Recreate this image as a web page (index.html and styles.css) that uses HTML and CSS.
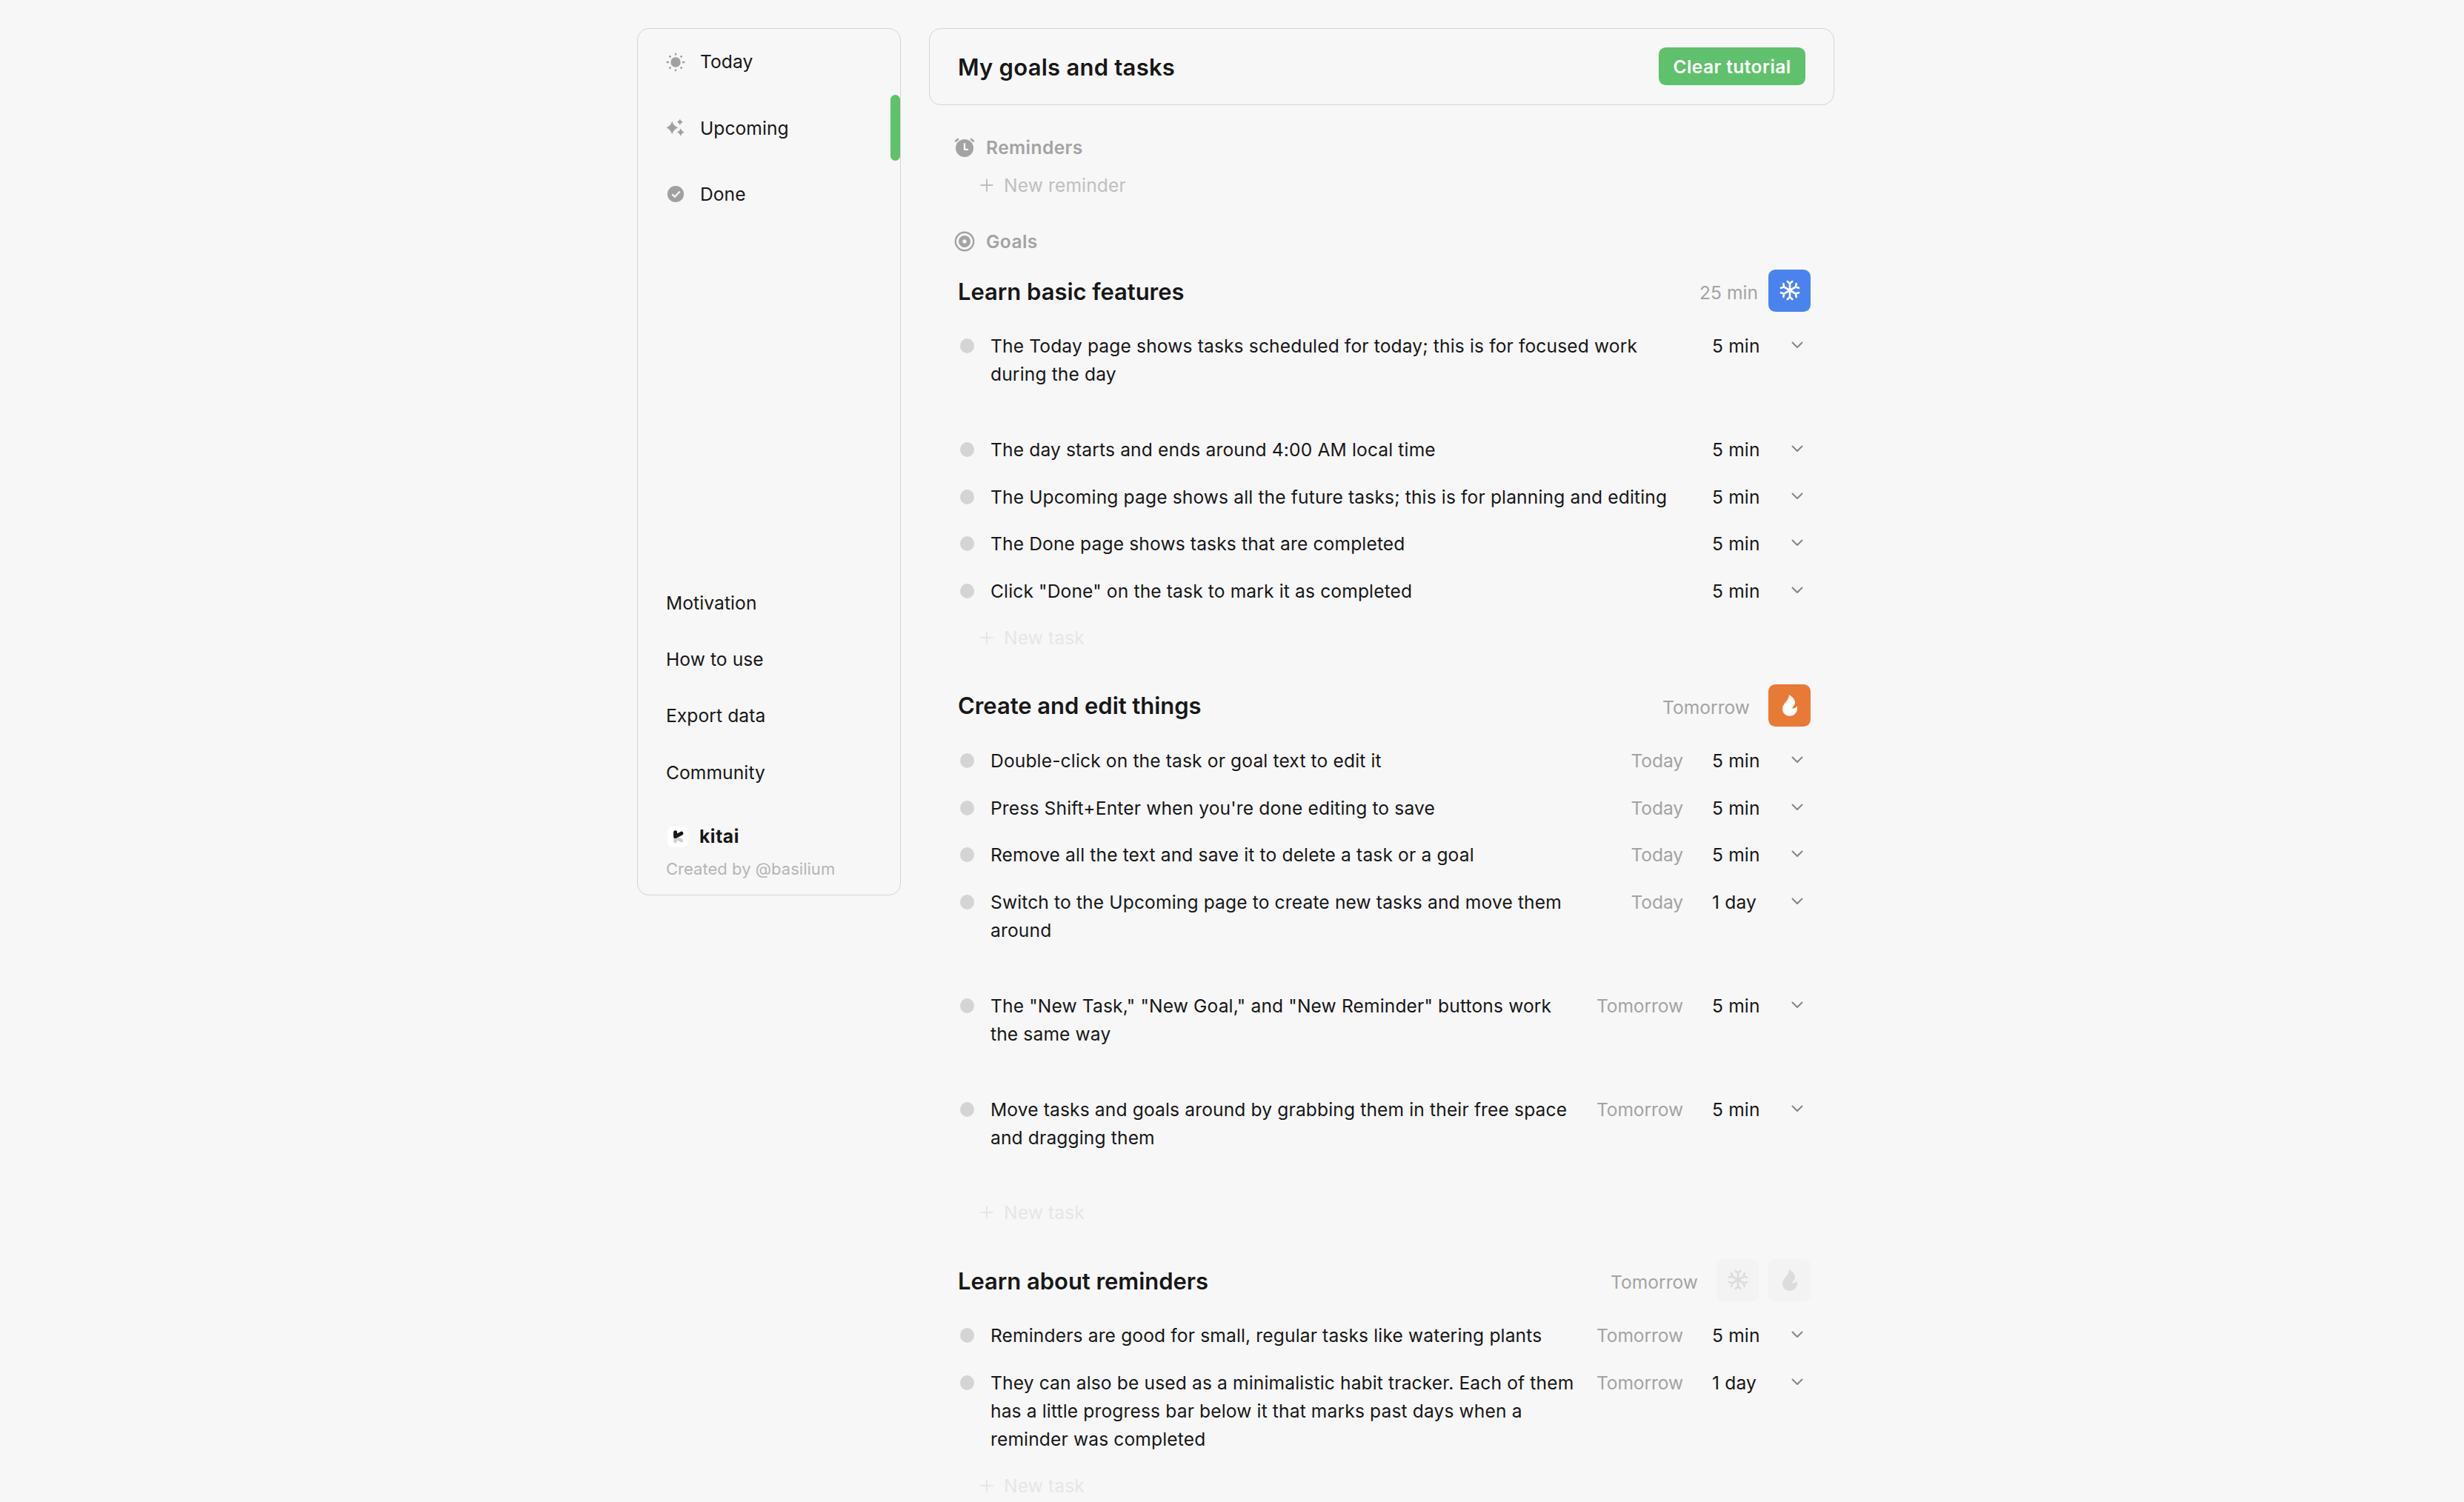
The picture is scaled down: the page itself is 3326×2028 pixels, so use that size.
FILE: index.html
```
<!DOCTYPE html>
<html lang="en">
<head>
<meta charset="UTF-8">
<meta name="viewport" content="width=device-width, initial-scale=1.0">
<title>kitai</title>
<link rel="stylesheet" href="styles.css">
</head>
<body>
<!-- shared icons -->
<svg class="defs">
  <symbol id="chevron" viewBox="0 0 16 10">
    <path d="M1.5 1.5L8 8L14.5 1.5" fill="none" stroke="currentColor" stroke-width="2" stroke-linecap="round" stroke-linejoin="round"/>
  </symbol>
  <symbol id="plus" viewBox="0 0 18 18">
    <path d="M9 0.5V17.5M0.5 9H17.5" stroke="currentColor" stroke-width="2"/>
  </symbol>
  <symbol id="snow" viewBox="-15 -15 30 30">
    <g fill="none" stroke="currentColor" stroke-width="2.6" stroke-linecap="round" stroke-linejoin="round">
      <g id="arms"><path d="M0 -9V9M-3.3 -12L0 -9L3.3 -12M-3.3 12L0 9L3.3 12"/></g>
      <use href="#arms" transform="rotate(60)"/>
      <use href="#arms" transform="rotate(120)"/>
    </g>
  </symbol>
  <symbol id="fire" viewBox="0 0 60 86">
    <path d="M27 0C43 9 51 20 51 31C51 42 41 47 39 55C47 56 54 52 59 46C64 68 50 86 29 86C12 86 0 73 0 56C0 34 25 28 27 0Z" fill="currentColor"/>
  </symbol>
</svg>

<div class="page">
  <aside class="sidebar">
    <nav>
      <a class="nav-item">
        <svg class="nav-icon" viewBox="-13 -13 26 26">
          <circle r="6.7" fill="currentColor"/>
          <path d="M0 -12.3V-9.4M0 9.4V12.3M-12.3 0H-9M9 0H12.3M-8.6 -8.6L-6.6 -6.6M8.6 -8.6L6.6 -6.6M-8.6 8.6L-6.6 6.6M8.6 8.6L6.6 6.6" stroke="currentColor" stroke-width="2.3"/>
        </svg>
        Today
      </a>
      <a class="nav-item">
        <svg class="nav-icon" viewBox="-13 -13 26 26">
          <path d="M-4.8 -9.2Q-2.7 -2.7 3.3 -0.5Q-2.7 1.7 -4.8 8.2Q-6.9 1.7 -12.6 -0.5Q-6.9 -2.7 -4.8 -9.2ZM5.8 -12.3Q7 -9.4 9.8 -8.3Q7 -7.2 5.8 -4.3Q4.6 -7.2 1.8 -8.3Q4.6 -9.4 5.8 -12.3ZM6.8 0.6Q8 4.2 11.8 5.6Q8 7 6.8 11Q5.6 7 1.8 5.6Q5.6 4.2 6.8 0.6Z" fill="currentColor"/>
        </svg>
        Upcoming
        <span class="marker"></span>
      </a>
      <a class="nav-item">
        <svg class="nav-icon" viewBox="-13 -13 26 26">
          <circle r="11.1" fill="currentColor"/>
          <path d="M-4.8 0.3L-1.2 3.6L5.8 -3.6" fill="none" stroke="#f7f7f7" stroke-width="2.2"/>
        </svg>
        Done
      </a>
    </nav>
    <div class="links">
      <a>Motivation</a>
      <a>How to use</a>
      <a>Export data</a>
      <a>Community</a>
      <div class="brand">
        <svg class="logo" viewBox="0 0 28 28">
          <rect width="28" height="28" rx="7" fill="#fff"/>
          <path d="M10.5 20V15L18.8 18.8" fill="none" stroke="#cfcfcf" stroke-width="4.6" stroke-linecap="round" stroke-linejoin="round"/>
          <path d="M10.6 7.8V13.6L18.8 9.2" fill="none" stroke="#171717" stroke-width="5" stroke-linecap="round" stroke-linejoin="round"/>
        </svg>
        kitai
      </div>
      <div class="author">Created by @basilium</div>
    </div>
  </aside>

  <main class="main">
    <header class="header">
      <h1>My goals and tasks</h1>
      <button class="clear">Clear tutorial</button>
    </header>

    <div class="label">
      <svg class="label-icon" viewBox="-14 -14 28 28">
        <circle cy="1" r="12" fill="currentColor"/>
        <path d="M-12.6 -7.8L-8.2 -11.8M12.6 -7.8L8.2 -11.8" stroke="currentColor" stroke-width="2.6"/>
        <path d="M0 -5.8V2.9H5" fill="none" stroke="#f7f7f7" stroke-width="2.4"/>
      </svg>
      Reminders
    </div>
    <div class="new new-reminder"><svg class="plus"><use href="#plus"/></svg>New reminder</div>
    <div class="label label-goals">
      <svg class="label-icon" viewBox="-14 -14 28 28">
        <circle r="12.2" fill="none" stroke="currentColor" stroke-width="2.4"/>
        <circle r="5.4" fill="none" stroke="currentColor" stroke-width="5.2"/>
      </svg>
      Goals
    </div>

    <section class="goal goal-first">
      <div class="goal-head">
        <h2>Learn basic features</h2>
        <span class="goal-info total">25 min</span>
        <span class="badge blue"><svg class="snow"><use href="#snow"/></svg></span>
      </div>
      <div class="task tall"><i class="dot"></i><p>The Today page shows tasks scheduled for today; this is for focused work<br>during the day</p><span class="due"></span><span class="time">5 min</span><svg class="chevron"><use href="#chevron"/></svg></div>
      <div class="task"><i class="dot"></i><p>The day starts and ends around 4:00 AM local time</p><span class="due"></span><span class="time">5 min</span><svg class="chevron"><use href="#chevron"/></svg></div>
      <div class="task"><i class="dot"></i><p>The Upcoming page shows all the future tasks; this is for planning and editing</p><span class="due"></span><span class="time">5 min</span><svg class="chevron"><use href="#chevron"/></svg></div>
      <div class="task"><i class="dot"></i><p>The Done page shows tasks that are completed</p><span class="due"></span><span class="time">5 min</span><svg class="chevron"><use href="#chevron"/></svg></div>
      <div class="task"><i class="dot"></i><p>Click "Done" on the task to mark it as completed</p><span class="due"></span><span class="time">5 min</span><svg class="chevron"><use href="#chevron"/></svg></div>
      <div class="new new-task"><svg class="plus"><use href="#plus"/></svg>New task</div>
    </section>

    <section class="goal">
      <div class="goal-head">
        <h2>Create and edit things</h2>
        <span class="goal-info">Tomorrow</span>
        <span class="badge orange"><svg class="fire"><use href="#fire"/></svg></span>
      </div>
      <div class="task"><i class="dot"></i><p>Double-click on the task or goal text to edit it</p><span class="due">Today</span><span class="time">5 min</span><svg class="chevron"><use href="#chevron"/></svg></div>
      <div class="task"><i class="dot"></i><p>Press Shift+Enter when you're done editing to save</p><span class="due">Today</span><span class="time">5 min</span><svg class="chevron"><use href="#chevron"/></svg></div>
      <div class="task"><i class="dot"></i><p>Remove all the text and save it to delete a task or a goal</p><span class="due">Today</span><span class="time">5 min</span><svg class="chevron"><use href="#chevron"/></svg></div>
      <div class="task tall"><i class="dot"></i><p>Switch to the Upcoming page to create new tasks and move them<br>around</p><span class="due">Today</span><span class="time">1 day</span><svg class="chevron"><use href="#chevron"/></svg></div>
      <div class="task tall"><i class="dot"></i><p>The "New Task," "New Goal," and "New Reminder" buttons work<br>the same way</p><span class="due">Tomorrow</span><span class="time">5 min</span><svg class="chevron"><use href="#chevron"/></svg></div>
      <div class="task tall"><i class="dot"></i><p>Move tasks and goals around by grabbing them in their free space<br>and dragging them</p><span class="due">Tomorrow</span><span class="time">5 min</span><svg class="chevron"><use href="#chevron"/></svg></div>
      <div class="new new-task"><svg class="plus"><use href="#plus"/></svg>New task</div>
    </section>

    <section class="goal">
      <div class="goal-head">
        <h2>Learn about reminders</h2>
        <span class="goal-info">Tomorrow</span>
        <span class="badge"><svg class="snow"><use href="#snow"/></svg></span>
        <span class="badge"><svg class="fire"><use href="#fire"/></svg></span>
      </div>
      <div class="task"><i class="dot"></i><p>Reminders are good for small, regular tasks like watering plants</p><span class="due">Tomorrow</span><span class="time">5 min</span><svg class="chevron"><use href="#chevron"/></svg></div>
      <div class="task tall"><i class="dot"></i><p>They can also be used as a minimalistic habit tracker. Each of them<br>has a little progress bar below it that marks past days when a<br>reminder was completed</p><span class="due">Tomorrow</span><span class="time">1 day</span><svg class="chevron"><use href="#chevron"/></svg></div>
      <div class="new new-task"><svg class="plus"><use href="#plus"/></svg>New task</div>
    </section>
  </main>
</div>
</body>
</html>
```
FILE: styles.css
```
html {
  font-size: 25.45px;
}
* {
  box-sizing: border-box;
}
body {
  margin: 0;
  height: 2028px;
  overflow: hidden;
  background: #f7f7f7;
  color: #171717;
  font-family: Inter, "Liberation Sans", sans-serif;
  font-size: 24.6px;
  line-height: 1.5rem;
  letter-spacing: 0.13px;
}
h1, h2, p {
  margin: 0;
}
svg {
  display: block;
  flex: none;
}
.defs {
  display: none;
}
.page {
  display: flex;
  align-items: flex-start;
  gap: 38px;
  padding: 38px 0 0 860px;
}

/* sidebar */
.sidebar {
  display: flex;
  flex-direction: column;
  justify-content: space-between;
  width: 356px;
  height: 1171px;
  border: 1px solid #d4d4d4;
  border-radius: 16px;
}
.nav-item {
  display: flex;
  align-items: center;
  height: 3.5rem;
  padding-left: 38px;
  letter-spacing: 0.05px;
}
.nav-icon {
  width: 26px;
  height: 26px;
  margin-right: 20px;
  color: #a0a0a0;
}
.marker {
  width: 13px;
  height: 100%;
  margin-left: auto;
  border-radius: 6.5px;
  background: #5fc16b;
}
.links {
  padding: 0 0 17px 38px;
}
.links a {
  display: block;
  line-height: 3rem;
  letter-spacing: 0.08px;
}
.brand {
  display: flex;
  align-items: center;
  height: 2rem;
  margin-top: 23px;
  font-weight: 700;
  letter-spacing: 0.6px;
}
.logo {
  width: 28px;
  height: 28px;
  margin: 0 15px 0 2px;
}
.author {
  color: #b5b5b5;
  font-size: 22px;
  line-height: 36px;
  letter-spacing: 0.03px;
}

/* content */
.main {
  width: 1222px;
}
.header {
  display: flex;
  align-items: center;
  justify-content: space-between;
  height: 104px;
  padding: 0 38px;
  border: 1px solid #d4d4d4;
  border-radius: 16px;
}
h1 {
  padding-top: 2px;
  font-size: 31px;
  font-weight: 600;
  letter-spacing: 0.24px;
}
.clear {
  width: 198px;
  height: 51px;
  margin-bottom: 2px;
  padding: 1px 0 0;
  border: 0;
  border-radius: 9.5px;
  background: #5fc16b;
  color: #fff;
  font: 600 24.6px Inter, "Liberation Sans", sans-serif;
  letter-spacing: 0.4px;
}
.label {
  display: flex;
  align-items: center;
  height: 2rem;
  margin: 32px 0 0 34px;
  color: #a3a3a3;
  font-weight: 600;
  letter-spacing: 0.4px;
}
.label-goals {
  margin-top: 26px;
}
.label-icon {
  width: 28px;
  height: 28px;
  margin-right: 15px;
}
.new {
  display: flex;
  align-items: center;
  padding-left: 69px;
}
.new-reminder {
  height: 50px;
  color: #bfbfbf;
}
.plus {
  width: 18px;
  height: 18px;
  margin-right: 14px;
}
.new-task {
  height: 2.5rem;
  padding-top: 3px;
  color: #e6e6e6;
}
.goal-head {
  display: flex;
  align-items: center;
  height: 4rem;
  padding: 1.25rem 32px 0.5rem 39px;
}
.goal-first {
  margin-top: -1px;
}
.goal-first .goal-head {
  height: 3.25rem;
  padding-top: 0.5rem;
}
h2 {
  flex: 1;
  padding-top: 3px;
  font-size: 31px;
  font-weight: 600;
  letter-spacing: -0.05px;
}
.goal-info {
  padding: 6px 12px 0 0;
  color: #a3a3a3;
  letter-spacing: 0;
}
.total {
  padding-right: 1px;
}
.badge {
  display: flex;
  align-items: center;
  justify-content: center;
  width: 57px;
  height: 57px;
  margin-left: 13px;
  border-radius: 9.5px;
  background: #f3f3f3;
  color: #dcdcdc;
}
.blue {
  background: #4a83ee;
  color: #fff;
}
.orange {
  background: #e97a36;
  color: #fff;
}
.snow {
  width: 30px;
  height: 30px;
}
.fire {
  width: 20px;
  height: 29px;
}

/* task rows */
.task {
  display: flex;
  height: 2.5rem;
  padding: 14.5px 42px 0 42px;
}
.tall {
  height: 5.5rem;
}
.dot {
  flex: none;
  width: 19px;
  height: 20px;
  margin: 9px 22px 0 0;
  border-radius: 50%;
  background: #d4d4d4;
}
.task p {
  flex: 1;
  white-space: nowrap;
}
.due {
  color: #a3a3a3;
  letter-spacing: -0.1px;
}
.time {
  width: 107px;
  margin-left: 39px;
  letter-spacing: 0.15px;
}
.chevron {
  width: 16px;
  height: 10px;
  margin-top: 13px;
  color: #858585;
}
```
